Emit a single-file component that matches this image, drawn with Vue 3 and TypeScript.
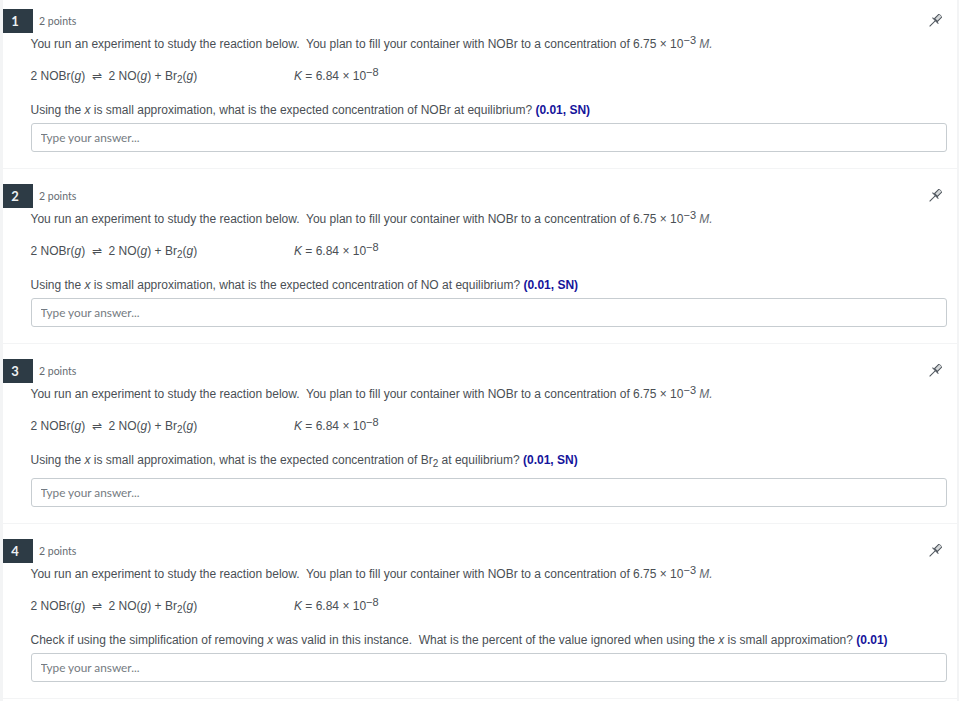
<script setup lang="ts">
interface Question {
  n: number;
  kind: 'nobr' | 'no' | 'br2' | 'check';
}
const questions: Question[] = [
  { n: 1, kind: 'nobr' },
  { n: 2, kind: 'no' },
  { n: 3, kind: 'br2' },
  { n: 4, kind: 'check' },
];
</script>

<template>
  <main class="page">
    <section v-for="q in questions" :key="q.n" class="question" :class="{ tall: q.kind === 'br2' }">
      <header class="head">
        <span class="badge">{{ q.n }}</span>
        <span class="points">2 points</span>
        <svg class="pin" width="14" height="14" viewBox="0 0 14 14" aria-hidden="true">
          <g transform="rotate(45 7 7)" fill="none" stroke="#50575e" stroke-width="1.1">
            <path d="M3.8 -0.6 H10.2" />
            <path d="M5 -0.6 V5.6 H9 V-0.6" fill="#d5d8da" />
            <path d="M2.8 6.4 H11.2" />
            <path d="M7 6.4 V14.6" stroke-width="1" />
          </g>
        </svg>
      </header>
      <div class="body">
        <p class="line intro">You run an experiment to study the reaction below.&nbsp; You plan to fill your container with NOBr to a concentration of 6.75 × 10<sup>−3</sup> <i class="unit">M.</i></p>
        <p class="line eq">
          <span class="reaction">2 NOBr(<i>g</i>)&nbsp; ⇌&nbsp; 2 NO(<i>g</i>) + Br<sub>2</sub>(<i>g</i>)</span>
          <span><i>K</i> = 6.84 × 10<sup>−8</sup></span>
        </p>
        <p v-if="q.kind === 'nobr'" class="line ask">Using the <i>x</i> is small approximation, what is the expected concentration of NOBr at equilibrium? <b>(0.01, SN)</b></p>
        <p v-else-if="q.kind === 'no'" class="line ask">Using the <i>x</i> is small approximation, what is the expected concentration of NO at equilibrium? <b>(0.01, SN)</b></p>
        <p v-else-if="q.kind === 'br2'" class="line ask">Using the <i>x</i> is small approximation, what is the expected concentration of Br<sub>2</sub> at equilibrium? <b>(0.01, SN)</b></p>
        <p v-else class="line ask">Check if using the simplification of removing <i>x</i> was valid in this instance.&nbsp; What is the percent of the value ignored when using the <i>x</i> is small approximation? <b>(0.01)</b></p>
        <input class="answer" type="text" placeholder="Type your answer..." />
      </div>
    </section>
  </main>
</template>

<style>
html, body { margin: 0; background: #fff; overflow: hidden; }
</style>

<style scoped>
.page {
  box-sizing: border-box;
  height: 701px;
  overflow: hidden;
  border-left: 3px solid #f3f4f5;
  border-right: 2px solid #f3f4f5;
  font-family: "Liberation Sans", Arial, sans-serif;
  font-size: 12px;
  color: #4a4f55;
}
.question {
  height: 175px;
  box-sizing: border-box;
  padding-top: 15px;
  border-bottom: 1px solid #f3f4f5;
}
.question:first-child { height: 169px; padding-top: 9px; }
.question.tall { height: 180px; }
.head {
  display: flex;
  align-items: center;
  height: 24px;
  margin-left: -3px;
}
.badge {
  width: 33px;
  height: 24px;
  line-height: 24px;
  padding-right: 3px;
  box-sizing: border-box;
  text-align: center;
  background: #2d3b45;
  color: #eef1f3;
  font-family: Lato, sans-serif;
  font-size: 13px;
  font-weight: 700;
}
.points {
  margin-left: 6px;
  margin-top: -1px;
  font-family: Lato, sans-serif;
  font-size: 10.5px;
  color: #666c72;
}
.pin { margin: -1px 15px 0 auto; }
.body { padding: 0 10px 0 27.5px; }
.line {
  margin: 0;
  height: 20px;
  line-height: 20px;
  white-space: nowrap;
}
.intro { margin-top: 1px; }
.eq { margin-top: 12px; display: flex; }
.reaction { width: 263.5px; }
.ask { margin-top: 14px; }
.tall .ask { margin-bottom: 8px; }
.unit { color: #666c72; }
sup { font-size: 11px; line-height: 0; vertical-align: 4px; }
sub { font-size: 10px; line-height: 0; vertical-align: -3px; }
b { color: #14149b; }
.answer {
  display: block;
  box-sizing: border-box;
  width: calc(100% - 0.5px);
  height: 29px;
  margin-top: 3px;
  margin-left: 0.5px;
  padding: 0 8.5px;
  border: 1px solid #c7cdd1;
  border-radius: 3px;
  background: #fff;
  font-family: Lato, sans-serif;
  font-size: 11.8px;
  outline: none;
}
.answer::placeholder { color: #757b81; opacity: 1; }
</style>
